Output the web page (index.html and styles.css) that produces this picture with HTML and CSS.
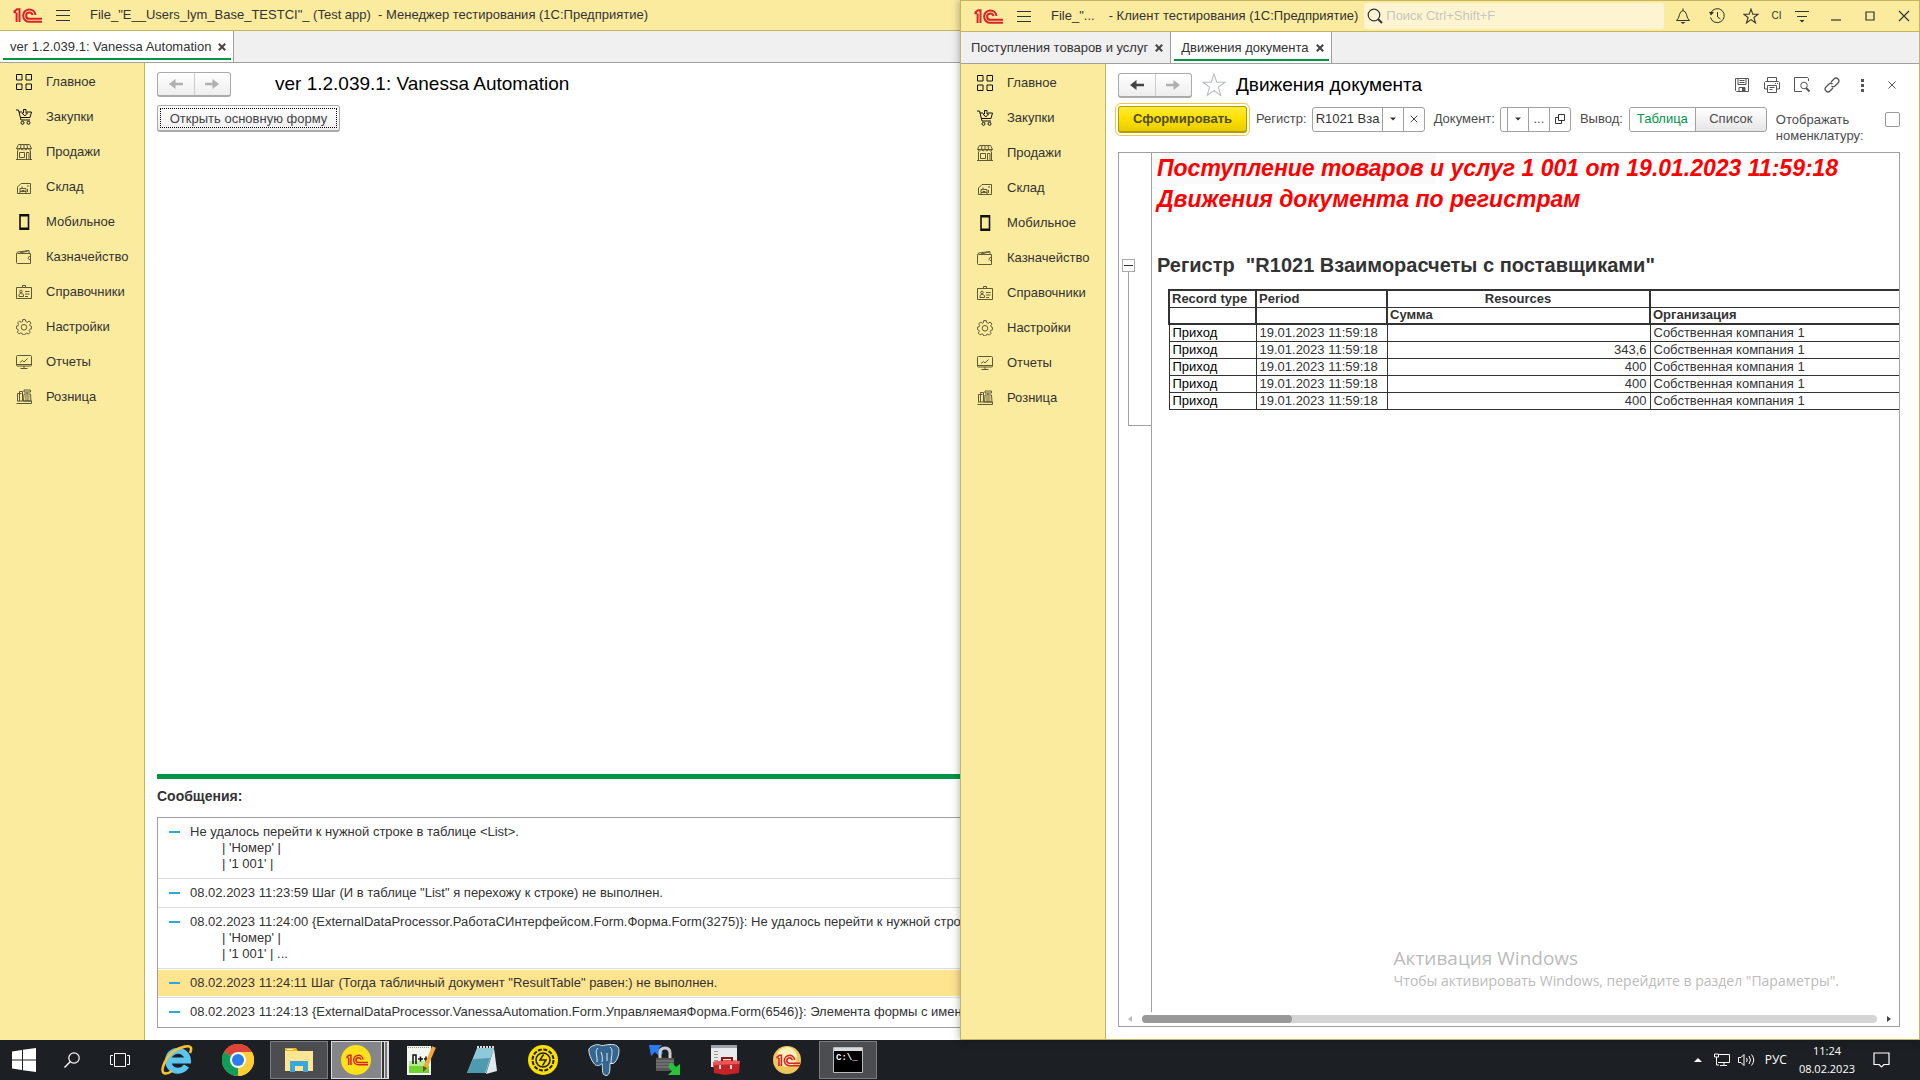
FILE: index.html
```html
<!DOCTYPE html>
<html lang="ru">
<head>
<meta charset="utf-8">
<title>1С:Предприятие</title>
<link rel="stylesheet" href="styles.css">
</head>
<body>
<svg class="defs" aria-hidden="true">
  <symbol id="logo" viewBox="0 0 29 15"><path d="M.5 4.200h2.500M1 3.800 4 1.200h2.500V14M3.600 4.500V14M22.500 7A6.200 6.200 0 1 0 16.500 13.800H29M19.500 7.200A3.200 3.200 0 1 0 16.500 10.800H29"/></symbol>
  <symbol id="menu" viewBox="0 0 14 12"><path d="M0 1.500h14M0 6.500h14M0 11.500h14"/></symbol>
  <symbol id="i-main" viewBox="0 0 16 16"><path d="M.5.500h5.500v5.500H.5zM10 .5h5.500v5.500H10zM.5 10h5.500v5.500H.5zM10 10h5.500v5.500H10z"/></symbol>
  <symbol id="i-buy" viewBox="0 0 16 16"><path d="M0 1h2.500L5 11h9M3 3h3M11 3h4.500L14 8.500H4.500M7.500.500h2.500V4h1.500L8.800 7 6 4h1.500z"/><circle cx="6.500" cy="13.800" r="1.500"/><circle cx="12.500" cy="13.800" r="1.500"/></symbol>
  <symbol id="i-sell" viewBox="0 0 16 16"><path d="M2.500.500h11l2 4H.500zM.5 4.500q2 3 3.700 0 2 3 3.800 0 2 3 3.800 0 2 3 3.700 0M1.500 6.500v9h13v-9M3.500 8.500h5v5h-5zM10.500 15.500v-7h2.500v7M5 1 4.500 4M8 1v3M11 1l.5 3M0 15.500h16"/></symbol>
  <symbol id="i-stock" viewBox="0 0 16 16"><path d="M1.500 14.500V8L5 4.500h9.500v10zM4 14v-4.500h6V14M5.500 11.500h3M6 9.500v-2M11 7h2M11.500 10v3M4 12.500h6"/></symbol>
  <symbol id="i-mob" viewBox="0 0 16 16"><path stroke-width="1.600" d="M4 .8h8.500v14.400H4z"/><path stroke-width="2" d="M4 1.500h8.500M4 14.500h8.500"/></symbol>
  <symbol id="i-cash" viewBox="0 0 16 16"><path d="M1.500 4.500h13v10h-13q-1 0-1-1v-9q0-1 1.500-1.500l11-1.500v3M15 7.500h-2q-2 2 0 3h2M4 4l8-2"/></symbol>
  <symbol id="i-ref" viewBox="0 0 16 16"><path d="M.5 3.500h15v11H.5zM6.500 3.500V1.500h3v2M3 12.500v-2l2-1.500 2.500 1.500v2zM9 7.500h4.500M9 10h4.500M9 12.500h3"/><circle cx="5" cy="7.500" r="1.300"/></symbol>
  <symbol id="i-set" viewBox="0 0 16 16"><path d="M6.700.6h2.600l.5 2 1.500.7L13.200 2 15 4l-1.300 1.700.6 1.400 1.300.3v2.400l-1.800.4-.6 1.300 1 1.700-1.900 1.900-1.700-1-1.300.6-.5 1.200H6.700l-.5-1.400-1.400-.6-1.700 1-1.800-1.800 1-1.700-.6-1.400-1.300-.4V7.200l1.700-.4.6-1.300L1.600 4l1.800-1.900 1.800 1.100 1.300-.6z"/><circle cx="8" cy="8.300" r="2.800"/></symbol>
  <symbol id="i-rep" viewBox="0 0 16 16"><path d="M1.500 1.500h13q1 0 1 1v8.500q0 1-1 1h-13q-1 0-1-1V2.500q0-1 1-1zM4.500 14.500h7M8 12v2M4 8.500l2.500-2L8 8l3.500-3.500M.5 10.500h15"/></symbol>
  <symbol id="i-ret" viewBox="0 0 16 16"><path d="M.5 14.500h15M1.500 12V4.500h4M3.500 12V2.500h3V12M1 12h14.500v2.500M8 1h6.500v2H8zM11 3v2M8 5h6.500l.5 7H7.500zM9 7h4.500M9 9h4.500M9 11h4.500"/></symbol>
  <symbol id="i-left" viewBox="0 0 14 10"><path d="M6.500 0v3.800H14v2.400H6.500V10L0 5z"/></symbol>
  <symbol id="i-right" viewBox="0 0 14 10"><path d="M7.500 0v3.800H0v2.400h7.500V10L14 5z"/></symbol>
  <symbol id="i-star" viewBox="0 0 22 22"><path d="m11 1 2.500 7.500H21l-6 4.500 2.200 7.500L11 16l-6.200 4.500L7 13 1 8.500h7.500z"/></symbol>
  <symbol id="i-close" viewBox="0 0 8 8"><path d="m.8.8 6.400 6.400M7.200.8.8 7.200"/></symbol>
  <symbol id="i-find" viewBox="0 0 16 16"><circle cx="7" cy="7" r="5.800"/><path stroke-width="2" d="m11 11 4 4"/></symbol>
  <symbol id="i-down" viewBox="0 0 6 4"><path d="M0 .5h6l-3 3z"/></symbol>
  <symbol id="win-logo" viewBox="0 0 24 24"><path fill="#fff" d="M0 3.400 10 2v9.500H0zM11 1.800 24 0v11.500H11zM0 12.500h10V22L0 20.600zM11 12.500h13V24l-13-1.800z"/></symbol>
</svg>

<main class="desktop">
  <section class="window">
    <header class="titlebar">
      <svg class="logo"><use href="#logo"/></svg>
      <svg class="burger"><use href="#menu"/></svg>
      <h1 class="app-name">File_"E__Users_lym_Base_TESTCI"_ (Test app)&nbsp; - Менеджер тестирования (1С:Предприятие)</h1>
    </header>
    <nav class="tabs">
      <button class="tab tab-on">ver 1.2.039.1: Vanessa Automation<svg class="x x-bold"><use href="#i-close"/></svg></button>
    </nav>
    <div class="body">
      <nav class="side">
        <a href="#"><svg class="dark"><use href="#i-main"/></svg>Главное</a>
        <a href="#"><svg class="dark"><use href="#i-buy"/></svg>Закупки</a>
        <a href="#"><svg><use href="#i-sell"/></svg>Продажи</a>
        <a href="#"><svg><use href="#i-stock"/></svg>Склад</a>
        <a href="#"><svg class="dark"><use href="#i-mob"/></svg>Мобильное</a>
        <a href="#"><svg><use href="#i-cash"/></svg>Казначейство</a>
        <a href="#"><svg><use href="#i-ref"/></svg>Справочники</a>
        <a href="#"><svg><use href="#i-set"/></svg>Настройки</a>
        <a href="#"><svg><use href="#i-rep"/></svg>Отчеты</a>
        <a href="#"><svg><use href="#i-ret"/></svg>Розница</a>
      </nav>
      <div class="form form-left">
        <div class="head">
          <div class="history"><button aria-label="Назад" class="dim"><svg><use href="#i-left"/></svg></button><button aria-label="Вперед" class="dim"><svg><use href="#i-right"/></svg></button></div>
          <h2 class="title title-left">ver 1.2.039.1: Vanessa Automation</h2>
        </div>
        <div class="open-row"><button class="open"><span>Открыть основную форму</span></button></div>
        <section class="messages">
          <h3>Сообщения:</h3>
          <ul>
            <li>Не удалось перейти к нужной строке в таблице &lt;List&gt;.<span class="sub">| 'Номер' |<br>| '1 001' |</span></li>
            <li>08.02.2023 11:23:59 Шаг (И в таблице "List" я перехожу к строке) не выполнен.</li>
            <li>08.02.2023 11:24:00 {ExternalDataProcessor.РаботаСИнтерфейсом.Form.Форма.Form(3275)}: Не удалось перейти к нужной строк<span class="sub">| 'Номер' |<br>| '1 001' | ...</span></li>
            <li class="picked">08.02.2023 11:24:11 Шаг (Тогда табличный документ "ResultTable" равен:) не выполнен.</li>
            <li>08.02.2023 11:24:13 {ExternalDataProcessor.VanessaAutomation.Form.УправляемаяФорма.Form(6546)}: Элемента формы с имене</li>
          </ul>
        </section>
      </div>
    </div>
  </section>

  <section class="window window-front">
    <header class="titlebar">
      <svg class="logo"><use href="#logo"/></svg>
      <svg class="burger"><use href="#menu"/></svg>
      <h1 class="app-name"><span class="short">File_"...</span>- Клиент тестирования (1С:Предприятие)</h1>
      <label class="search"><svg><use href="#i-find"/></svg><input type="text" placeholder="Поиск Ctrl+Shift+F" aria-label="Поиск"></label>
      <div class="tools">
        <button aria-label="Уведомления"><svg viewBox="0 0 16 16"><path d="M1.500 12.500h13q-2.500-2-3-6-.5-3-3.500-4-3 1-3.500 4-.5 4-3 6zM8 .5v2"/><path fill="#333" stroke="none" d="M5.500 14h5L8 16z"/></svg></button>
        <button aria-label="История"><svg viewBox="0 0 16 16"><path d="M2 4.500a7 7 0 1 1-.5 5M8.500 4v5l3 2"/><path fill="#333" stroke="none" d="M0 4h5L2 7.500z"/></svg></button>
        <button aria-label="Избранное"><svg viewBox="0 0 22 22"><path stroke-width="1.500" d="m11 1.500 2.500 7H21l-6 4.500 2.200 7.500L11 16l-6.200 4.500L7 13 1 8.500h7.500z"/></svg></button>
        <button class="user">CI</button>
        <button aria-label="Сервис"><svg viewBox="0 0 16 16"><path d="M1 3.500h14M3 8.500h10"/><path fill="#333" stroke="none" d="M5.500 12h5L8 14.500z"/></svg></button>
      </div>
      <div class="win-buttons">
        <button aria-label="Свернуть"><svg viewBox="0 0 10 10"><path d="M0 9h10"/></svg></button>
        <button aria-label="Развернуть"><svg viewBox="0 0 10 10"><path d="M1 1h8v8H1z"/></svg></button>
        <button aria-label="Закрыть"><svg viewBox="0 0 10 10"><path d="m0 0 10 10M10 0 0 10"/></svg></button>
      </div>
    </header>
    <nav class="tabs">
      <button class="tab">Поступления товаров и услуг<svg class="x x-bold"><use href="#i-close"/></svg></button>
      <button class="tab tab-on">Движения документа<svg class="x x-bold"><use href="#i-close"/></svg></button>
    </nav>
    <div class="body">
      <nav class="side">
        <a href="#"><svg class="dark"><use href="#i-main"/></svg>Главное</a>
        <a href="#"><svg class="dark"><use href="#i-buy"/></svg>Закупки</a>
        <a href="#"><svg><use href="#i-sell"/></svg>Продажи</a>
        <a href="#"><svg><use href="#i-stock"/></svg>Склад</a>
        <a href="#"><svg class="dark"><use href="#i-mob"/></svg>Мобильное</a>
        <a href="#"><svg><use href="#i-cash"/></svg>Казначейство</a>
        <a href="#"><svg><use href="#i-ref"/></svg>Справочники</a>
        <a href="#"><svg><use href="#i-set"/></svg>Настройки</a>
        <a href="#"><svg><use href="#i-rep"/></svg>Отчеты</a>
        <a href="#"><svg><use href="#i-ret"/></svg>Розница</a>
      </nav>
      <div class="form form-right">
        <div class="head">
          <div class="history"><button aria-label="Назад"><svg><use href="#i-left"/></svg></button><button aria-label="Вперед" class="dim"><svg><use href="#i-right"/></svg></button></div>
          <svg class="fav"><use href="#i-star"/></svg>
          <h2 class="title">Движения документа</h2>
          <div class="actions">
            <button aria-label="Сохранить"><svg viewBox="0 0 16 16"><path d="M1.500 1.500h13v13h-12l-1-1zM4 1.500v6h8v-6M5.500 3.500h5M5.500 5.500h5M5 14.500v-4h6v4"/><path fill="#555" stroke="none" d="M8 11h3v3H8z"/></svg></button>
            <button aria-label="Печать"><svg viewBox="0 0 16 16"><path d="M3.500 4.500v-4h9v4M3.500 12H.500V5.500l1-1h13l1 1V12h-3M3.500 8.500h9v7h-9zM5.500 10.500h5M5.500 12.500h3M11 6.500h1M13 6.500h1"/></svg></button>
            <button aria-label="Просмотр"><svg viewBox="0 0 16 16"><path d="M14.500 4V1.500l-1-1H.5v14H8"/><circle cx="10" cy="8.500" r="3.300"/><path stroke-width="2" d="m12 11 3.500 3.500"/></svg></button>
            <button aria-label="Ссылка"><svg viewBox="0 0 16 16"><path stroke-width="1.300" d="m7 5 3-3q2-2 4 0t0 4l-3 3q-2 1.500-3.500 0M9 11l-3 3q-2 2-4 0t0-4l3-3q2-1.500 3.500 0"/></svg></button>
            <button aria-label="Еще"><svg viewBox="0 0 16 16"><path fill="#555" stroke="none" d="M7 2h3v3H7zM7 7h3v3H7zM7 12h3v3H7z"/></svg></button>
            <button aria-label="Закрыть"><svg viewBox="0 0 16 16"><path d="m4.500 4.500 7 7M11.500 4.500l-7 7"/></svg></button>
          </div>
        </div>
        <div class="params">
          <button class="run">Сформировать</button>
          <label for="reg">Регистр:</label>
          <div class="combo combo-reg"><input id="reg" type="text" value="R1021 Вза"><button aria-label="Выбрать"><svg class="caret"><use href="#i-down"/></svg></button><button aria-label="Очистить"><svg class="x"><use href="#i-close"/></svg></button></div>
          <label for="doc">Документ:</label>
          <div class="combo combo-doc"><input id="doc" type="text"><button aria-label="Список"><svg class="caret"><use href="#i-down"/></svg></button><button>...</button><button aria-label="Открыть"><svg class="pop" viewBox="0 0 10 10"><path d="M3.500.5h6v6h-6zM3.500 3.500h-3v6h6v-3"/></svg></button></div>
          <span class="cap">Вывод:</span>
          <div class="switch"><button class="on">Таблица</button><button>Список</button></div>
          <label class="nomen" for="nom">Отображать номенклатуру:</label>
          <input id="nom" class="check" type="checkbox">
        </div>
        <div class="sheet">
          <div class="sheet-main">
            <div class="gutter"><button class="fold" aria-label="Свернуть группу"></button><div class="bracket"></div></div>
            <div class="cells">
              <p class="red">Поступление товаров и услуг 1 001 от 19.01.2023 11:59:18</p>
              <p class="red">Движения документа по регистрам</p>
              <h3 class="reg-title">Регистр&nbsp; "R1021 Взаиморасчеты с поставщиками"</h3>
              <table>
                <colgroup><col class="c1"><col class="c2"><col class="c3"><col></colgroup>
                <thead>
                  <tr><th>Record type</th><th>Period</th><th class="mid">Resources</th><th></th></tr>
                  <tr><th></th><th></th><th>Сумма</th><th>Организация</th></tr>
                </thead>
                <tbody>
                  <tr><td>Приход</td><td>19.01.2023 11:59:18</td><td></td><td>Собственная компания 1</td></tr>
                  <tr><td>Приход</td><td>19.01.2023 11:59:18</td><td>343,6</td><td>Собственная компания 1</td></tr>
                  <tr><td>Приход</td><td>19.01.2023 11:59:18</td><td>400</td><td>Собственная компания 1</td></tr>
                  <tr><td>Приход</td><td>19.01.2023 11:59:18</td><td>400</td><td>Собственная компания 1</td></tr>
                  <tr><td>Приход</td><td>19.01.2023 11:59:18</td><td>400</td><td>Собственная компания 1</td></tr>
                </tbody>
              </table>
            </div>
          </div>
          <div class="scroll"><i class="arr arr-l"></i><div class="track"><div class="thumb"></div></div><i class="arr arr-r"></i></div>
        </div>
      </div>
    </div>
    <div class="watermark"><p class="wm-big">Активация Windows</p><p class="wm-small">Чтобы активировать Windows, перейдите в раздел "Параметры".</p></div>
  </section>
</main>

<footer class="taskbar">
  <button class="sys" aria-label="Пуск"><svg width="24" height="24"><use href="#win-logo"/></svg></button>
  <button class="sys" aria-label="Поиск"><svg width="16" height="16" viewBox="0 0 16 16"><circle cx="10" cy="6" r="5.200" fill="none" stroke="#fff" stroke-width="1.200"/><path d="M6.200 9.800.5 15.500" stroke="#fff" stroke-width="1.400"/></svg></button>
  <button class="sys" aria-label="Представление задач"><svg width="20" height="14" viewBox="0 0 20 14"><path d="M4.500.500h11v13h-11zM3 2.500H.500v9H3M17 2.500h2.500v9H17" fill="none" stroke="#fff"/></svg></button>
  <div class="apps">
    <button aria-label="Internet Explorer"><svg width="32" height="32" viewBox="0 0 32 32"><path fill="none" stroke="#5cc4ef" stroke-width="6" d="M25.500 22a10 10 0 1 1 1.500-5.500H8"/><path fill="none" stroke="#f7c22f" stroke-width="2.600" d="M3 29c-4-2 1-15 9-21S29 1 30 4c.5 2 0 3-1 5M3 29c2 1 5 0 8-2"/></svg></button>
    <button aria-label="Chrome"><svg width="32" height="32" viewBox="0 0 32 32"><circle cx="16" cy="16" r="16" fill="#fc3"/><path fill="#db4437" d="M16 16 2.100 8a16 16 0 0 1 27.800 0z"/><path fill="#0f9d58" d="M2.100 8 16 16l0 16A16 16 0 0 1 2.100 8z"/><path fill="#fc3" d="M16 8h13.900A16 16 0 0 1 16 32l7-12z"/><circle cx="16" cy="16" r="8" fill="#fff"/><circle cx="16" cy="16" r="6" fill="#2b7de9"/></svg></button>
    <button class="live" aria-label="Проводник"><svg width="28" height="24" viewBox="0 0 28 24"><path fill="#f3b51d" d="M0 0h11l2 3H0z"/><path fill="#fde591" d="M0 3h28v20H0z"/><path fill="#fff" d="M2 1h6v1H2z"/><path fill="#3aa6dd" d="M5 24V13h18v11h-5v-6h-8v6z"/></svg></button>
    <button class="live stack" aria-label="1С:Предприятие"><svg width="30" height="32" viewBox="0 0 30 32"><circle cx="15" cy="16" r="15" fill="#fde11a"/><svg class="tlogo" x="5" y="10" width="22" height="12"><use href="#logo"/></svg></svg></button>
    <button aria-label="Notepad++"><svg width="32" height="32" viewBox="0 0 32 32"><path fill="#f4f6f2" d="M2 2h24v29H2z"/><path fill="#6fd430" d="M4 22h20v7H4z"/><path fill="#b9eb94" d="M4 17h20v5H4z"/><path d="M3 3.500h22" stroke="#888" stroke-dasharray="1 1"/><path fill="none" stroke="#111" stroke-width="1.500" d="M8 20v-9h3v9M13 15h5M15.500 12.500v5M19 15h4M21 12.500v5"/><path stroke="#f0a93a" stroke-width="4" d="M29 3 20 24"/><path fill="#7b4a1f" d="m18 22 4 2-4 4z"/></svg></button>
    <button aria-label="Блокнот"><svg width="30" height="32" viewBox="0 0 30 32"><path fill="#8fc9d9" d="M10 4h17L19 29H0z"/><path fill="#4e9bb0" d="m6 15 17-1-5 15H0z"/><path fill="#dfe9ec" d="m27 4 3 23-11 3z"/><path d="M10 3h17" stroke="#ddd" stroke-width="2" stroke-dasharray="2 1"/></svg></button>
    <button aria-label="Автоматизация"><svg width="30" height="30" viewBox="0 0 30 30"><circle cx="15" cy="15" r="15" fill="#fde000"/><circle cx="15" cy="15" r="10.500" fill="none" stroke="#222" stroke-width="2" stroke-dasharray="4 1.500"/><circle cx="15" cy="15" r="7" fill="none" stroke="#222" stroke-width="1.600"/><path fill="none" stroke="#222" stroke-width="1.500" d="M15.500 9.500 12 15h6l-3.500 5.500"/></svg></button>
    <button aria-label="pgAdmin"><svg width="32" height="32" viewBox="0 0 32 32"><path fill="#336791" stroke="#dfe8ef" d="M6 1.500c4-2 6 0 8 0s5-1 8-1 9 0 9 6-3 12-6 13l-3 0c0 6 0 12-4 12-5 0-3-9-4-12-2 2-5 3-7 1C3 17 0 7 1 5s3-3 5-3.500z"/><path fill="none" stroke="#dfe8ef" d="M10 4c-4 3 0 9-1 14M22 3c4 3 1 9 1 16M13 8c1 3 2 6 1 10M19 9v8"/></svg></button>
    <button aria-label="Синхронизация"><svg width="32" height="32" viewBox="0 0 32 32"><path fill="#2b7cf0" d="M0 1h13l-3 3 4 5-4 3-4-4-4 4z"/><path fill="none" stroke="#ccc" stroke-width="3" d="M11 15V9q0-5 5-5t5 5v6"/><path fill="#555" d="M7 14h18v13H7z"/><path stroke="#888" stroke-width="1" d="M7 17h18M7 20h18M7 23h18"/><path fill="#25c43a" d="m22 18 5 5 4-3v11H19l4-4-4-4z"/></svg></button>
    <button aria-label="Инструменты"><svg width="30" height="32" viewBox="0 0 30 32"><path fill="#e8eaec" d="M0 1h26v22H0z"/><path fill="#9ba4ae" d="M0 1h26v3H0z"/><path stroke="#999" d="M3 7.500h4M3 10.500h4M3 13.500h4M3 16.500h4"/><path fill="#c52325" d="M2 18 14 16l15 1-1 12-14 2-11-2z"/><path fill="#e85955" d="m2 18 12-2 15 1-1 3-25 1z"/><path fill="none" stroke="#8b1719" stroke-width="2" d="M11 17v-3h10v3"/><path stroke="#ddd" stroke-width="2" d="M9 21v4M20 21v4"/></svg></button>
    <button aria-label="1С"><svg width="28" height="28" viewBox="0 0 28 28"><circle cx="14" cy="14" r="14" fill="#ecc85a"/><circle cx="14" cy="11" r="10" fill="#fdf0b8"/><svg class="tlogo" x="3" y="8" width="24" height="13"><use href="#logo"/></svg></svg></button>
    <button class="live" aria-label="Командная строка"><svg class="cmd" width="30" height="26" viewBox="0 0 30 26"><path fill="#000" stroke="#bbb" d="M.5.500h29v25H.5z"/><path fill="#d6dadd" d="M1 1h28v3H1z"/><text x="3" y="13">C:\_</text></svg></button>
  </div>
  <div class="tray">
    <svg width="8" height="6" viewBox="0 0 8 6"><path fill="#fff" d="M0 5h8L4 1z"/></svg>
    <svg class="net" width="16" height="14" viewBox="0 0 16 14"><path fill="none" stroke="#fff" d="M4 1.500h11.500v8H4M10 9.500v3M6 12.500h7M.5 1h4v3h-4zM2.500 4v8H5"/></svg>
    <svg class="vol" width="17" height="14" viewBox="0 0 17 14"><path fill="none" stroke="#fff" d="M.5 4.500H3l3-3v11l-3-3H.5zM8.500 5q1.500 2 0 4M11 3q3 4 0 8M13.500 1.500q4.500 5.500 0 11"/></svg>
    <span class="lang">РУС</span>
    <time class="clock">11:24<br>08.02.2023</time>
    <svg class="note" width="17" height="17" viewBox="0 0 17 17"><path fill="none" stroke="#fff" stroke-width="1.200" d="M1 1h15v11.500h-5L8.500 15 6 12.500H1z"/></svg>
  </div>
</footer>
</body>
</html>
```
FILE: styles.css
```css
* { box-sizing: border-box; }
body {
  margin: 0;
  min-height: 100vh;
  display: flex;
  flex-direction: column;
  font: 13px/16px "Liberation Sans", Arial, sans-serif;
  color: #333;
  background: #fff;
}
h1, h2, h3, p, ul { margin: 0; padding: 0; font: inherit; }
button, input { font: inherit; color: inherit; margin: 0; }
button { padding: 0; border: 0; background: none; display: flex; align-items: center; justify-content: center; }
svg { flex: none; }
.defs { position: absolute; width: 0; height: 0; }

.desktop { flex: 1; display: grid; grid-template-columns: minmax(0, 1fr) minmax(0, 1fr); }
.window { display: flex; flex-direction: column; min-width: 0; overflow: hidden; }
.window-front {
  position: relative;
  overflow: visible;
  border: 1px solid #c6b560;
  box-shadow: 0 0 8px rgba(0, 0, 0, .35);
}

.titlebar {
  display: flex;
  align-items: center;
  height: 31px;
  padding-left: 13px;
  background: #fbeb9e;
  border-bottom: 1px solid #c6b560;
  white-space: nowrap;
}
.logo { width: 29px; height: 15px; fill: none; stroke: #d9232a; stroke-width: 2; }
.burger { width: 14px; height: 12px; margin: 0 20px 0 14px; stroke: #333; fill: none; }
.short { margin-right: 14px; }
.search {
  display: flex;
  align-items: center;
  flex: 1;
  height: 26px;
  margin-left: 6px;
  padding-left: 3px;
  background: #fdf5d1;
  border-radius: 2px;
}
.search svg { width: 16px; height: 16px; fill: none; stroke: #333; stroke-width: 1.2; }
.search input { flex: 1; min-width: 0; border: 0; background: none; padding: 0 0 0 3px; }
.search input::placeholder { color: #c9c5bd; opacity: 1; }
.tools, .win-buttons { display: flex; align-items: center; }
.tools { gap: 18px; margin-left: 11px; }
.tools svg { width: 16px; height: 16px; fill: none; stroke: #333; }
.user { width: 9px; font-size: 10px; margin: 0 -5px; }
.win-buttons { gap: 24px; margin: 0 10px 0 21px; }
.win-buttons svg { width: 10px; height: 10px; fill: none; stroke: #333; stroke-width: 1.2; overflow: visible; }

.tabs { display: flex; height: 32px; background: #f0f0f0; border-bottom: 1px solid #a0a0a0; }
.tab { position: relative; padding: 0 7px 0 10px; gap: 7px; border-right: 1px solid #a0a0a0; white-space: nowrap; }
.tab-on { background: #fff; }
.tab-on::after { content: ""; position: absolute; left: 3px; right: 2px; bottom: 2px; height: 2px; background: #009646; }
.x { width: 8px; height: 8px; fill: none; stroke: #444; stroke-width: 1; }
.x-bold { stroke-width: 2; }

.body { flex: 1; display: flex; min-height: 0; }
.side { flex: none; width: 145px; padding-top: 1px; background: #fbeb9e; border-right: 1px solid #c6b560; display: flex; flex-direction: column; }
.side a { display: flex; align-items: center; gap: 14px; height: 35px; padding-left: 16px; color: #333; text-decoration: none; }
.side svg { width: 16px; height: 16px; fill: none; stroke: #5f5938; }
.side .dark { stroke: #111; }

.form { flex: 1; min-width: 0; display: flex; flex-direction: column; background: #fff; }
.form-left { padding: 8px 0 12px 12px; }
.form-right { padding: 8px 19px 12px 12px; }
.head { display: flex; align-items: center; height: 26px; }
.history { display: flex; width: 74px; height: 25px; border: 1px solid #aaa; border-bottom-width: 2px; border-radius: 3px; background: linear-gradient(#fff, #eee); }
.history button { flex: 1; }
.history button + button { border-left: 1px solid #ccc; }
.history svg { width: 14px; height: 10px; fill: #444; }
.history .dim svg { fill: #b0b0b0; }
.title { font-size: 19px; line-height: 24px; color: #000; white-space: nowrap; }
.title-left { margin-left: 44px; }
.fav { width: 24px; height: 24px; margin: 0 10px; fill: none; stroke: #b8bcc2; stroke-width: 1; }
.actions { display: flex; gap: 14px; margin-left: auto; }
.actions svg { width: 16px; height: 16px; fill: none; stroke: #555; }

.open-row { display: flex; padding-top: 8px; }
.open { height: 27px; width: 183px; padding: 2px; border: 1px solid #aaa; border-bottom-width: 2px; border-radius: 3px; background: linear-gradient(#fff, #eee); color: #444; white-space: nowrap; align-items: stretch; }
.open span { flex: 1; border: 1px dotted #000; line-height: 20px; }

.messages { margin-top: auto; border-top: 5px solid #009646; padding-top: 9px; }
.messages h3 { font-weight: bold; font-size: 14px; }
.messages ul { list-style: none; margin-top: 13px; border: 1px solid #a0a0a0; border-right: 0; white-space: nowrap; overflow: hidden; }
.messages li { position: relative; padding: 6px 0 6px 32px; }
.messages li + li { border-top: 1px solid #ddd; }
.messages li:last-child { padding-bottom: 7px; }
.messages li::before { content: ""; position: absolute; left: 11px; top: 13px; width: 11px; height: 2px; background: #2ba9dd; }
.sub { display: block; padding-left: 32px; }
.picked { background: #ffe48f; box-shadow: inset 0 1px #fff, inset 0 -1px #fff; }

.params { display: flex; align-items: center; height: 40px; margin-top: 1px; color: #4c4c4c; white-space: nowrap; }
.run { width: 129px; height: 27px; margin-top: 1px; border: 1px solid #b39b00; border-bottom-width: 2px; border-radius: 3px; background: linear-gradient(#ffea3a, #ffe000 50%, #e8cc00); font-weight: bold; color: #4c4c1f; outline: 1px solid #fac536; outline-offset: 2px; }
.params label, .cap { margin-left: 9px; }
.combo { display: flex; height: 25px; border: 1px solid #a0a0a0; border-radius: 3px; background: #fff; margin-left: 5px; }
.combo input { flex: 1; min-width: 0; border: 0; padding: 0 0 0 3px; background: none; color: #333; }
.combo-doc input { padding: 0; }
.combo button { width: 21px; border-left: 1px solid #a0a0a0; }
.combo-reg { width: 113px; }
.combo-doc { width: 71px; }
.caret { width: 6px; height: 4px; fill: #333; }
.pop { width: 10px; height: 10px; fill: none; stroke: #333; }
.switch { display: flex; width: 138px; height: 25px; margin-left: 6px; border: 1px solid #a0a0a0; border-radius: 3px; overflow: hidden; background: linear-gradient(#fff, #e6e6e6); }
.switch button { flex: 1; }
.switch .on { flex: none; width: 66px; background: #fff; color: #009646; border-right: 1px solid #a0a0a0; }
.params .nomen { width: 98px; white-space: normal; align-self: flex-start; margin-top: 13px; }
.check { appearance: none; width: 15px; height: 15px; margin-left: auto; border: 1px solid #999; border-radius: 2px; background: #fff; }

.sheet { flex: 1; display: flex; flex-direction: column; margin-top: 13px; border: 1px solid #a0a0a0; min-width: 0; }
.sheet-main { flex: 1; display: flex; min-height: 0; }
.gutter { flex: none; width: 33px; padding-top: 106px; border-right: 1px solid #a0a0a0; }
.fold { width: 13px; height: 13px; margin-left: 3px; border: 1px solid #aaa; background: linear-gradient(#333, #333) center / 9px 1px no-repeat #fff; }
.bracket { height: 154px; margin-left: 9px; border: solid #a0a0a0; border-width: 0 0 1px 1px; }
.cells { flex: 1; min-width: 0; overflow: hidden; white-space: nowrap; }
.red { height: 31px; padding-left: 5px; font: italic bold 23px/31px "Liberation Sans", Arial, sans-serif; color: #f00; }
.red:first-child { background: linear-gradient(#fafafa, #fafafa) 0 0 / 284px 31px no-repeat; }
.reg-title { padding: 38px 0 12px 5px; font-weight: bold; font-size: 20px; line-height: 24px; }
table { width: calc(100% - 15px); margin-left: 16px; border-collapse: collapse; table-layout: fixed; border-left: 1px solid #333; }
.c1 { width: 87px; }
.c2 { width: 131px; }
.c3 { width: 263px; }
th, td { height: 17px; padding: 0 3px; border: 1px solid #333; line-height: 14px; text-align: left; font-weight: normal; overflow: hidden; }
th { font-weight: bold; border-left-width: 2px; padding-left: 2px; }
thead { border-top: 2px solid #333; border-bottom: 2px solid #333; }
.mid { text-align: center; }
td:first-child { color: #000; }
td:nth-child(3) { text-align: right; }
.scroll { display: flex; align-items: center; justify-content: space-between; height: 14px; padding: 0 8px 0 9px; }
.track { flex: 1; height: 8px; margin: 0 10px; border-radius: 4px; background: #d5d5d5; }
.thumb { width: 150px; height: 8px; border-radius: 4px; background: #999; }
.arr { border: solid transparent; border-width: 3px 0; }
.arr-l { border-right: 4px solid #bbb; }
.arr-r { border-left: 4px solid #444; }

.watermark { position: absolute; right: 80px; bottom: 47px; font-family: "Open Sans", "Noto Sans", sans-serif; color: #bbb; white-space: nowrap; pointer-events: none; }
.wm-big { font-size: 19px; line-height: 24px; }
.wm-small { font-size: 14px; line-height: 22px; }

.taskbar { display: flex; height: 40px; background: #1c2024; color: #fff; }
.sys { width: 48px; }
.apps { display: flex; gap: 3px; margin-left: 4px; padding: 1px 0; }
.apps button { width: 58px; }
.apps .live { background: #4b4d51; border: 1px solid #7a7c7f; }
.apps .stack { background: linear-gradient(90deg, #84868a 49px, #ddd 49px 50px, #333 50px 52px, #ddd 52px 53px, #777 53px 55px, #ddd 55px); border-color: #ddd; padding-right: 9px; }
.tlogo { fill: none; stroke: #d9232a; stroke-width: 2; }
.cmd text { font: bold 9px "Liberation Mono", monospace; fill: #fff; }
.tray { display: flex; align-items: center; margin-left: auto; padding-right: 30px; font: 12px/18px "Open Sans", "Noto Sans", sans-serif; }
.net { margin-left: 12px; }
.vol { margin-left: 8px; }
.lang { margin-left: 10px; }
.clock { margin-left: 12px; text-align: center; font-size: 11px; }
.note { margin-left: 18px; }
```
